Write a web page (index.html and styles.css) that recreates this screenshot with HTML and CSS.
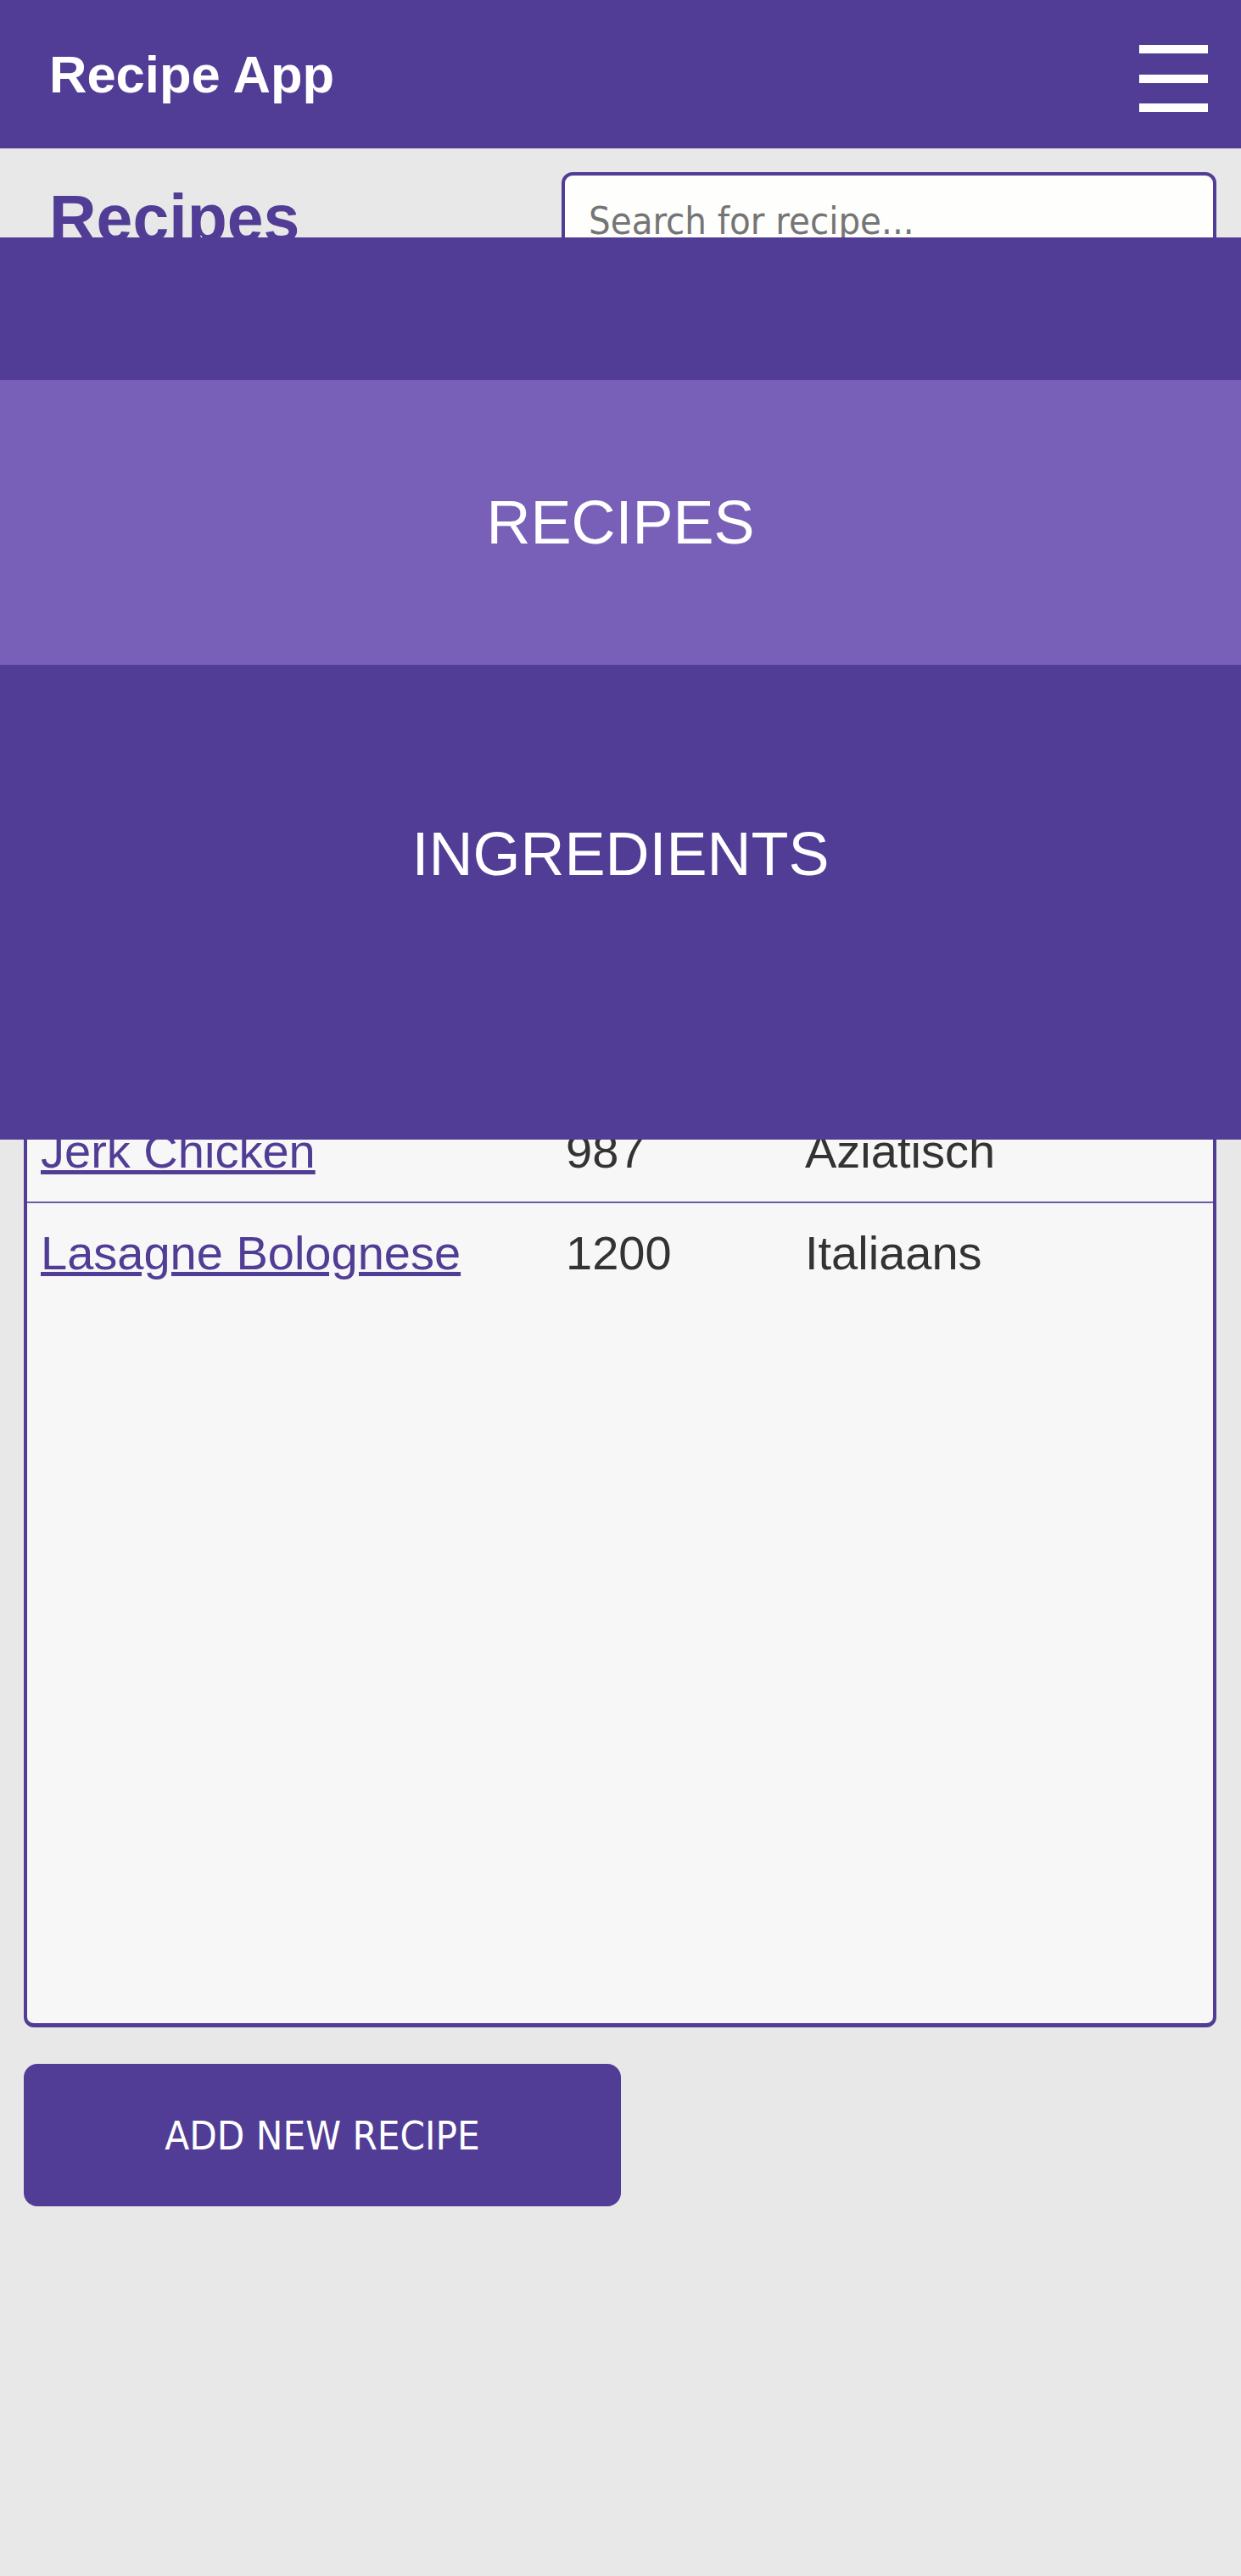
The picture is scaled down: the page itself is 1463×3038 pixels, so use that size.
FILE: index.html
```html
<!DOCTYPE html>
<html lang="nl">
<head>
<meta charset="utf-8">
<title>Recipe App</title>
<link rel="stylesheet" href="styles.css">
</head>
<body>
<header class="topbar">
  <div class="brand">Recipe App</div>
  <button class="burger" aria-label="Menu">
    <span class="bar"></span><span class="bar"></span><span class="bar"></span>
  </button>
</header>

<nav class="menu">
  <a class="menu-item active" href="#">RECIPES</a>
  <a class="menu-item" href="#">INGREDIENTS</a>
</nav>

<main class="content">
  <div class="title-row">
    <h1 class="page-title">Recipes</h1>
    <input class="search" type="text" placeholder="Search for recipe...">
  </div>

  <section class="card">
    <div class="row head">
      <div class="cell">Naam</div><div class="cell">Calorieën</div><div class="cell">Keuken</div>
    </div>
    <div class="row"><div class="cell"><a href="#">Beef Stroganoff</a></div><div class="cell">780</div><div class="cell">Russisch</div></div>
    <div class="row"><div class="cell"><a href="#">Chili con Carne</a></div><div class="cell">850</div><div class="cell">Mexicaans</div></div>
    <div class="row"><div class="cell"><a href="#">Couscous Salade</a></div><div class="cell">520</div><div class="cell">Marokkaans</div></div>
    <div class="row"><div class="cell"><a href="#">Falafel Wrap</a></div><div class="cell">610</div><div class="cell">Arabisch</div></div>
    <div class="row"><div class="cell"><a href="#">Groentesoep</a></div><div class="cell">320</div><div class="cell">Nederlands</div></div>
    <div class="row"><div class="cell"><a href="#">Hutspot</a></div><div class="cell">540</div><div class="cell">Nederlands</div></div>
    <div class="row"><div class="cell"><a href="#">Jambalaya</a></div><div class="cell">910</div><div class="cell">Amerikaans</div></div>
    <div class="row"><div class="cell"><a href="#">Jerk Chicken</a></div><div class="cell">987</div><div class="cell">Aziatisch</div></div>
    <div class="row"><div class="cell"><a href="#">Lasagne Bolognese</a></div><div class="cell">1200</div><div class="cell">Italiaans</div></div>
  </section>

  <button class="add-btn">ADD NEW RECIPE</button>
</main>
</body>
</html>
```

FILE: styles.css
```css
html, body {
  margin: 0;
  padding: 0;
}

body {
  position: relative;
  min-height: 3038px;
  background: #e8e8e8;
  font-family: "Liberation Sans", Arial, sans-serif;
  color: #333333;
}

.topbar {
  height: 175px;
  box-sizing: border-box;
  background: #513d95;
  display: flex;
  align-items: center;
  justify-content: space-between;
  padding: 0 39px 0 58px;
}

.brand {
  color: #ffffff;
  font-weight: bold;
  font-size: 61.5px;
}

.burger {
  margin-top: 10px;
  width: 81px;
  padding: 0;
  border: 0;
  background: transparent;
  display: flex;
  flex-direction: column;
  gap: 24.5px;
}

.bar {
  display: block;
  height: 10px;
  background: #ffffff;
}

.menu {
  position: absolute;
  top: 280px;
  left: 0;
  right: 0;
  background: #513d95;
  display: flex;
  flex-direction: column;
  padding: 168px 0 169px;
  z-index: 10;
}

.menu-item {
  height: 336px;
  display: flex;
  align-items: center;
  justify-content: center;
  color: #ffffff;
  text-decoration: none;
  font-size: 72px;
  font-family: "Liberation Sans", Arial, sans-serif;
}

.menu-item + .menu-item {
  margin-top: 55px;
}

.menu-item.active {
  background: #7860b9;
}

.content {
  padding: 0 29px 0 28px;
}

.title-row {
  display: flex;
  align-items: flex-start;
  justify-content: space-between;
  padding-top: 28px;
}

.page-title {
  margin: 10px 0 0 30px;
  font-size: 77px;
  font-weight: bold;
  color: #513d95;
  line-height: normal;
}

.search {
  width: 772px;
  box-sizing: border-box;
  border: 4px solid #513d95;
  border-radius: 13px;
  background: #fefefc;
  padding: 27px 28px;
  font-family: "DejaVu Sans Condensed", "DejaVu Sans", sans-serif;
  font-stretch: condensed;
  font-size: 45px;
  line-height: normal;
  color: #333333;
  outline: none;
}

.search::placeholder {
  color: #757575;
}

.card {
  margin-top: 19px;
  height: 2054px;
  box-sizing: border-box;
  border: 4px solid #513d95;
  border-bottom-width: 5px;
  border-radius: 12px;
  background: #f7f7f7;
  overflow: hidden;
}

.row {
  display: grid;
  grid-template-columns: 619px 282px 1fr;
  font-size: 56px;
  line-height: 64px;
  padding: 27px 0;
  border-top: 2px solid #6a5aab;
}

.row.head {
  border-top: 0;
  padding: 26px 0 26px;
  font-weight: bold;
  color: #513d95;
}

.cell {
  padding-left: 16px;
  white-space: nowrap;
}

.cell a {
  color: #513d95;
  text-decoration: underline;
}

.add-btn {
  display: block;
  margin-top: 43px;
  width: 704px;
  height: 168px;
  border: 0;
  border-radius: 16px;
  background: #513d95;
  color: #ffffff;
  font-family: "DejaVu Sans Condensed", "DejaVu Sans", sans-serif;
  font-stretch: condensed;
  font-size: 47px;
  padding: 0;
  cursor: pointer;
}
```
